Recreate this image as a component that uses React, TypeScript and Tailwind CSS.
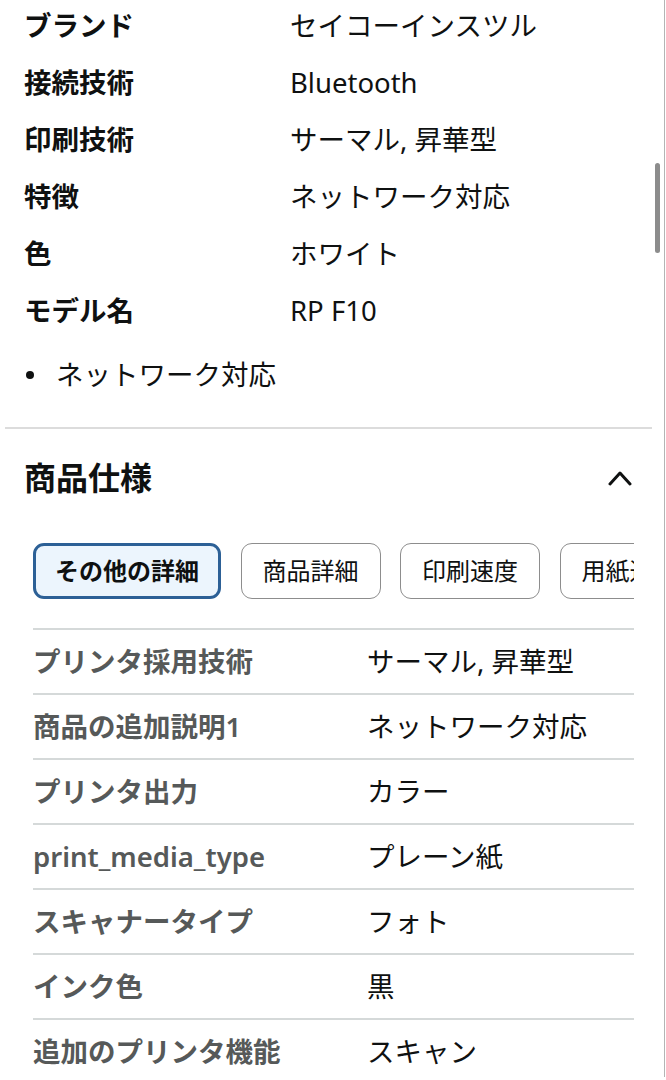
const overview = [
  { label: 'ブランド', value: 'セイコーインスツル' },
  { label: '接続技術', value: 'Bluetooth' },
  { label: '印刷技術', value: 'サーマル, 昇華型' },
  { label: '特徴', value: 'ネットワーク対応' },
  { label: '色', value: 'ホワイト' },
  { label: 'モデル名', value: 'RP F10' },
];

const tabs = ['その他の詳細', '商品詳細', '印刷速度', '用紙送り'];

const specs = [
  { label: 'プリンタ採用技術', value: 'サーマル, 昇華型' },
  { label: '商品の追加説明1', value: 'ネットワーク対応' },
  { label: 'プリンタ出力', value: 'カラー' },
  { label: 'print_media_type', value: 'プレーン紙' },
  { label: 'スキャナータイプ', value: 'フォト' },
  { label: 'インク色', value: '黒' },
  { label: '追加のプリンタ機能', value: 'スキャン' },
];

const App = () => {
  return (
    <div className="relative w-[666px] h-[1080px] overflow-hidden bg-white text-[#0f1111] font-['Noto_Sans','Noto_Sans_CJK_JP',sans-serif]">
      <div className="w-[665px] h-full border-r border-[#b4b4b4]">
        {/* overview */}
        <div className="pl-[24px] mt-[-3px]">
          {overview.map((row) => (
            <div key={row.label} className="flex items-center h-[57px] text-[27.5px]">
              <div className="w-[266px] font-bold">{row.label}</div>
              <div>{row.value}</div>
            </div>
          ))}
        </div>

        <ul className="mt-[14px] h-[44px] pl-[26px] flex items-center text-[27.5px]">
          <li className="flex items-center">
            <span className="w-[8px] h-[8px] rounded-full bg-[#0f1111] mr-[22px]" />
            ネットワーク対応
          </li>
        </ul>

        <div className="mt-[30px] ml-[5px] w-[647px] h-[2px] bg-[#dcdcdc]" />

        {/* 商品仕様 */}
        <div className="h-[98px] flex items-center justify-between pl-[24px] pr-[32px]">
          <h2 className="text-[32px] font-bold">商品仕様</h2>
          <svg width="24" height="16" viewBox="0 0 24 16" fill="none">
            <polyline points="2,14 12,3 22,14" stroke="#0f1111" strokeWidth="3" strokeLinecap="round" strokeLinejoin="round" />
          </svg>
        </div>

        <div className="mt-[16px] ml-[33px] w-[601px] overflow-hidden">
          <div className="flex gap-[19.5px] w-max">
            {tabs.map((tab, i) =>
              i === 0 ? (
                <button
                  key={tab}
                  className="h-[56px] px-[19px] rounded-[11px] border-[3px] border-[#2c6096] bg-[#ecf5fd] text-[24px] font-bold whitespace-nowrap"
                >
                  {tab}
                </button>
              ) : (
                <button
                  key={tab}
                  className="h-[56px] px-[21px] rounded-[11px] border border-[#8d8d8d] bg-white text-[24px] whitespace-nowrap"
                >
                  {tab}
                </button>
              )
            )}
          </div>
        </div>

        <div className="mt-[29px] ml-[33px] w-[601px] border-t-2 border-[#d5d9d9]">
          {specs.map((row) => (
            <div key={row.label} className="flex items-center h-[65px] border-b-2 border-[#d5d9d9] text-[27.5px]">
              <div className="w-[334px] font-semibold text-[#565959]">{row.label}</div>
              <div>{row.value}</div>
            </div>
          ))}
        </div>
      </div>

      {/* scrollbar */}
      <div className="absolute left-[655px] top-[163px] w-[5px] h-[90px] rounded-full bg-[#8c8c8c]" />
    </div>
  );
};

export default App;
